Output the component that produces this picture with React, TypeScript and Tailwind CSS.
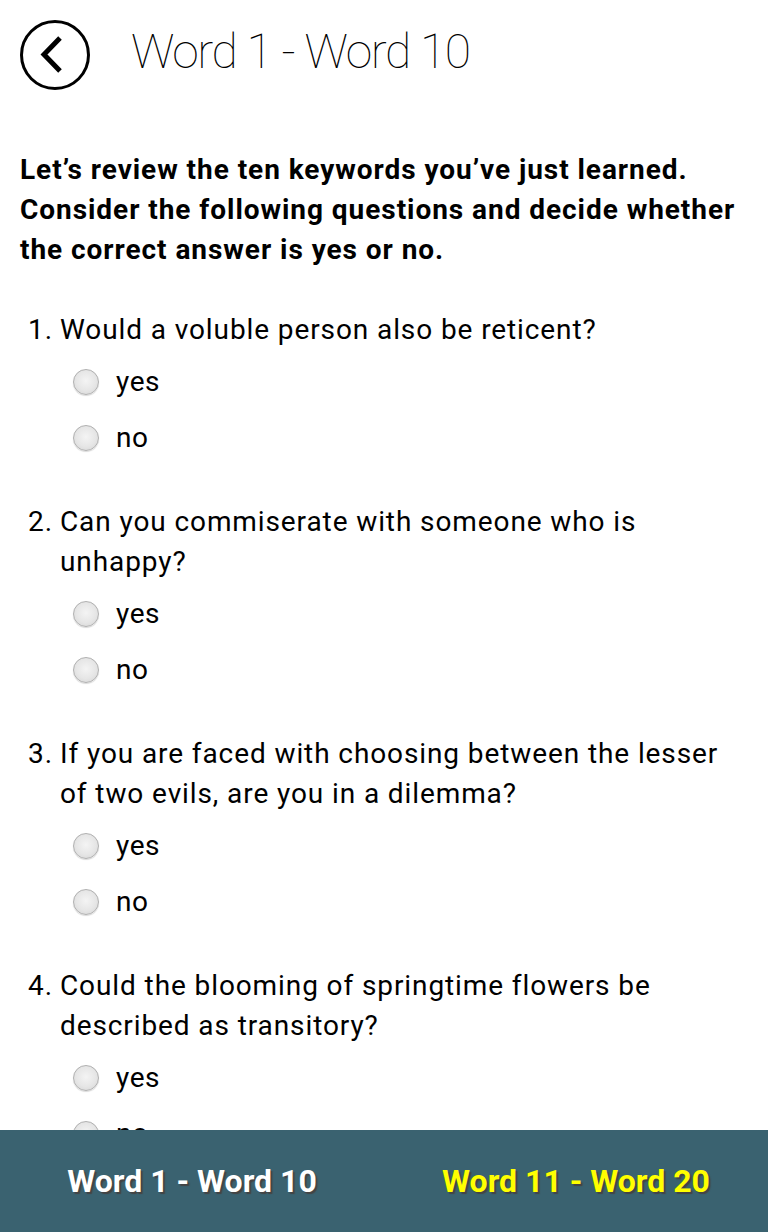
import React from "react";

const questions: string[] = [
  "Would a voluble person also be reticent?",
  "Can you commiserate with someone who is unhappy?",
  "If you are faced with choosing between the lesser of two evils, are you in a dilemma?",
  "Could the blooming of springtime flowers be described as transitory?",
  "Would a person who is ambivalent be certain?",
];

function Radio() {
  return (
    <span className="block w-[26px] h-[26px] rounded-full border border-[#b0b0b0] bg-[radial-gradient(circle_at_50%_45%,#f4f4f4_0%,#e6e6e6_55%,#d2d2d2_100%)] shadow-[0_1px_1px_rgba(0,0,0,0.15)] shrink-0" />
  );
}

function Option({ label }: { label: string }) {
  return (
    <div className="flex items-center h-[56px] pl-[73px] gap-[17px]">
      <Radio />
      <span className="text-[28px] tracking-[0.6px] text-black leading-none">{label}</span>
    </div>
  );
}

export default function App() {
  return (
    <div
      className="w-[768px] h-[1232px] flex flex-col bg-white overflow-hidden"
      style={{ fontFamily: "Roboto, 'Liberation Sans', sans-serif" }}
    >
      <div className="flex-1 overflow-hidden">
        <div className="flex items-center pt-[20px] pl-[20px] gap-[41px]">
          <svg width="70" height="70" viewBox="0 0 70 70" className="shrink-0">
            <circle cx="35" cy="35" r="33.5" fill="none" stroke="black" strokeWidth="3" />
            <path d="M40 18 L24 34.5 L40 51" fill="none" stroke="black" strokeWidth="5" strokeLinecap="butt" strokeLinejoin="miter" />
          </svg>
          <h1 className="text-[48px] font-thin text-black leading-none tracking-[-1.4px] -mt-[6px]">
            Word 1 - Word 10
          </h1>
        </div>

        <p className="mt-[60px] pl-[20px] pr-[24px] text-[28px] font-bold tracking-[0.95px] leading-[40px] text-black">
          Let’s review the ten keywords you’ve just learned. Consider the following questions and decide whether the correct answer is yes or no.
        </p>

        <div className="mt-[40px]">
          {questions.map((q, i) => (
            <div key={i} className="mb-[36px]">
              <div className="flex pl-[28px] pr-[20px] text-[28px] tracking-[0.9px] leading-[40px] text-black mb-[4px]">
                <span className="w-[32px] shrink-0">{i + 1}.</span>
                <span className="flex-1">{q}</span>
              </div>
              <Option label="yes" />
              <Option label="no" />
            </div>
          ))}
        </div>
      </div>

      <div className="h-[102px] shrink-0 bg-[#3a6270] flex items-center">
        <div className="flex-1 flex justify-center">
          <span className="text-[32px] font-bold text-white [text-shadow:2px_2px_1px_#444]">
            Word 1 - Word 10
          </span>
        </div>
        <div className="flex-1 flex justify-center">
          <span className="text-[32px] font-bold text-[#ffff00] [text-shadow:2px_2px_1px_#444]">
            Word 11 - Word 20
          </span>
        </div>
      </div>
    </div>
  );
}
